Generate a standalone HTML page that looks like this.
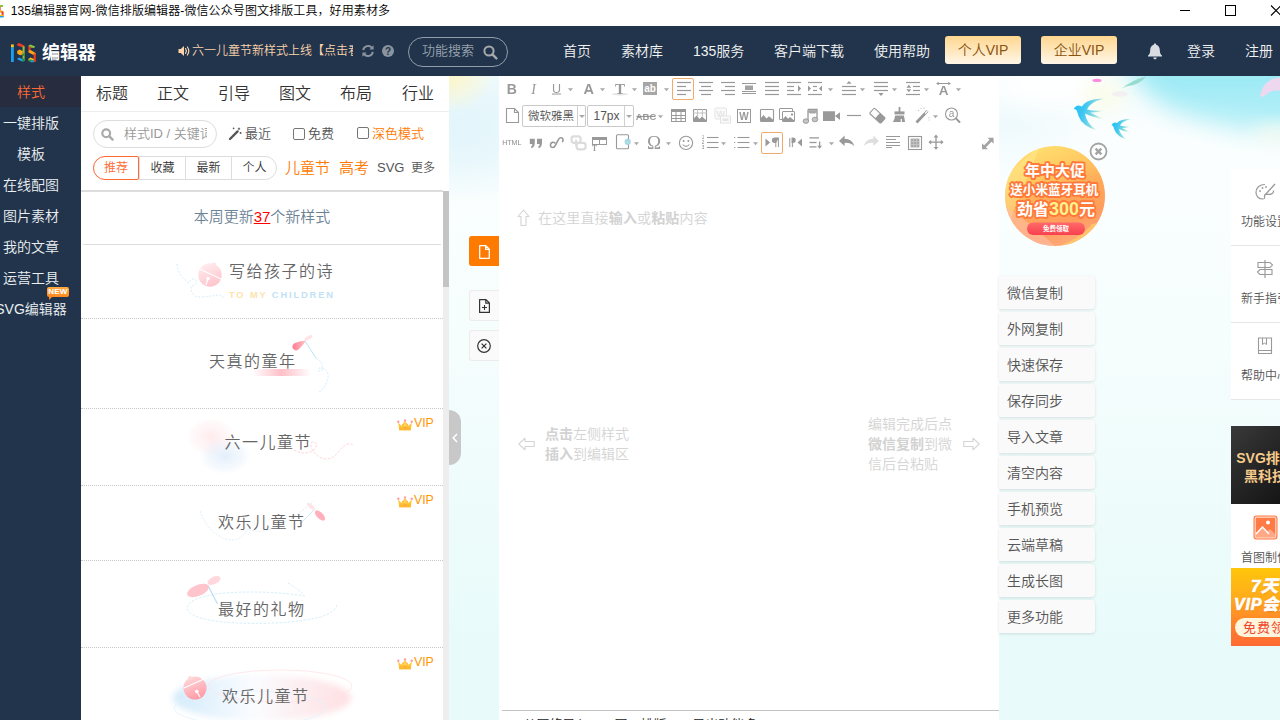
<!DOCTYPE html>
<html lang="zh-CN">
<head>
<meta charset="utf-8">
<title>135编辑器官网-微信排版编辑器-微信公众号图文排版工具，好用素材多</title>
<style>
*{box-sizing:border-box;margin:0;padding:0}
html,body{width:1280px;height:720px;overflow:hidden;background:#fff}
body{position:relative;font-family:"Liberation Sans","Noto Sans CJK SC",sans-serif;font-size:14px;color:#333;line-height:1;font-weight:350}
.abs{position:absolute}
svg{display:block;overflow:visible}
/* title bar */
#title{position:absolute;left:0;top:0;width:1280px;height:26px;background:#fff;overflow:hidden}
#title .t{position:absolute;left:10.700px;top:1px;height:21px;line-height:21px;font-size:12px;color:#000;white-space:nowrap;letter-spacing:0.1px}
/* nav */
#nav{position:absolute;left:0;top:26px;width:1280px;height:50px;background:#21344b;overflow:hidden}
#nav .lk{position:absolute;top:0;height:50px;line-height:51px;font-size:14px;color:#f2f2f2;white-space:nowrap}
#nav .vip{position:absolute;top:10px;height:28px;width:76px;border-radius:3px;background:linear-gradient(#ffd78f,#fff6e8);color:#8a5410;font-size:14px;line-height:28px;text-align:center}
/* sidebar */
#side{position:absolute;left:0;top:76px;width:81px;height:644px;background:#21344b;overflow:hidden}
#side .it{position:absolute;left:-19px;width:100px;height:31px;line-height:33px;text-align:center;font-size:14px;color:#eceff2;white-space:nowrap}
#side .it.on{background:#272c3f;color:#ff6a33;left:0;width:81px;padding-right:19px}
/* left style panel */
#panel{position:absolute;left:81px;top:76px;width:368px;height:644px;background:#fff;overflow:hidden}
/* sky */
#sky{position:absolute;left:449px;top:76px;width:831px;height:644px;overflow:hidden;background:#e9fbfa}
/* editor */
#ed{position:absolute;left:499px;top:76px;width:500px;height:644px;background:#fff;overflow:hidden}

/* nav extras */
#logo{position:absolute;left:42px;top:0;height:50px;line-height:55px;font-size:18px;font-weight:bold;color:#fff;white-space:nowrap;letter-spacing:0}
#ann{position:absolute;left:176px;top:0;width:177px;height:50px;overflow:hidden;white-space:nowrap;font-size:12px;line-height:50px;color:#fbd3ab;padding-left:16px}
#srch{position:absolute;left:408px;top:11px;width:100px;height:30px;border:1px solid #939daa;border-radius:15px;color:#98a2ae;font-size:13px;line-height:26px;padding-left:13px;white-space:nowrap}
/* panel */
#tabs{position:absolute;left:0;top:0;width:368px;height:36px;border-bottom:1px solid #eee}
#tabs span{position:absolute;top:0;height:34px;line-height:36px;font-size:16px;color:#333;white-space:nowrap}
#sin{position:absolute;left:12px;top:44px;width:124px;height:28px;border:1px solid #ddd;border-radius:14px;overflow:hidden;white-space:nowrap;font-size:13px;line-height:26px;color:#999;padding-left:30px}
.f13{position:absolute;font-size:13px;line-height:20px;height:20px;white-space:nowrap;color:#555}
.cb{position:absolute;width:12px;height:12px;border:1px solid #767676;border-radius:2px;background:#fff}
#bg4{position:absolute;left:12px;top:80px;width:184px;height:24px;border:1px solid #ddd;border-radius:12px;background:#fff}
#bg4 span{position:absolute;top:-1px;height:24px;width:46px;line-height:23px;text-align:center;font-size:12px;color:#333;border-left:1px solid #ddd;border-top:1px solid transparent;border-bottom:1px solid transparent}
#bg4 span.on{left:-1px;border:1px solid #ff6a33;color:#ff6a33;border-radius:12px 2px 2px 12px;background:#fff}
.hot{position:absolute;top:81px;height:22px;line-height:22px;font-size:15px;color:#ff7a00;white-space:nowrap}
.gry{position:absolute;top:81px;height:22px;line-height:22px;font-size:12px;color:#555;white-space:nowrap}
#list{position:absolute;left:0;top:114px;width:362px;height:530px;border-top:2px solid #ddd;overflow:hidden}
#sb{position:absolute;left:362px;top:115px;width:6px;height:529px;background:#eee}
#sb i{position:absolute;left:0;top:0;width:6px;height:96px;background:#c4c4c4}
#wk{position:absolute;left:2px;top:0;width:358px;height:53px;border-bottom:1px solid #ddd;text-align:center;font-size:15px;line-height:53px;color:#6b8296;white-space:nowrap}
#wk u{color:#f00}
.row{position:absolute;left:0;width:362px;border-bottom:1px dotted #ccc}
.row .tt{position:absolute;white-space:nowrap;font-size:17px;color:#666;letter-spacing:1px;line-height:24px;height:24px}
.vp{position:absolute;left:316px;width:40px;height:16px;font-size:12px;line-height:16px;color:#ff9800;white-space:nowrap;padding-left:17px}

.dot{position:absolute;left:81px;width:362px;height:0;border-top:1px dotted #c8c8c8}
#lc .tt{position:absolute;white-space:nowrap;font-size:16px;color:#666;letter-spacing:1.5px;line-height:24px;height:24px}
#lc .sub{position:absolute;white-space:nowrap;font-size:9.300px;font-weight:bold;letter-spacing:1.860px;line-height:14px;height:14px}
#lc .vp{position:absolute;left:397px;width:40px;height:16px;font-size:12.300px;line-height:16px;color:#ff9800;white-space:nowrap;padding-left:17px}
/* toolbar */
.selb{position:absolute;width:22px;height:22px;border:1px solid #f0aa6c;border-radius:2px;background:#fff}
.combo{position:absolute;height:22px;border:1px solid #c9c9c9;border-radius:2px;background:#fff;font-size:12px;color:#555}
.combo span{position:absolute;top:0;height:20px;line-height:20px;overflow:hidden;white-space:nowrap}
.combo i{position:absolute;top:0;width:1px;height:20px;background:#d0d0d0}
.combo i:after{content:"";position:absolute;left:2px;top:9px;border:3px solid transparent;border-top:3px solid #aaa;border-bottom:0}
.hint{position:absolute;white-space:nowrap;font-size:14px;line-height:20px;color:#d4d4d4}
.hint b{font-weight:bold;color:#d2d2d2}
#edbot{position:absolute;left:2.500px;top:634px;width:498px;height:10px;border-top:1px solid #c2c2c2;overflow:hidden}
#edbot span{position:absolute;left:22px;top:6.300px;font-size:13px;line-height:16px;color:#222;white-space:nowrap}
/* side buttons between panel and editor */
.sbtn{position:absolute;left:469px;width:30px;height:31px;border:1px solid #ececec;border-right:0;border-radius:3px 0 0 3px;background:#fafafa}
.sbtn.on{background:#ff7a00;border-color:#ff7a00;height:30px}
#hdl{position:absolute;left:449px;top:410px;width:12px;height:55px;background:#c8c8c8;border-radius:0 12px 12px 0}
/* right action buttons */
.rb{position:absolute;left:999px;width:96px;height:33px;background:#fafafa;border-radius:0 4px 4px 0;box-shadow:0 1px 3px rgba(0,0,0,.12);font-size:14px;line-height:35px;color:#555;padding-left:8px;white-space:nowrap}
/* right panel */
#rp{position:absolute;left:1231px;top:169px;width:49px;height:231px;background:#fff;overflow:hidden}
#rp .ri{position:absolute;left:0;width:49px;height:77px;border-bottom:1px solid #e6e6e6}
#rp .ri span,.rlab{position:absolute;left:10px;top:45px;font-size:12px;line-height:16px;color:#555;white-space:nowrap}
#skyg{position:absolute;left:0;top:0;width:831px;height:644px;background:
 radial-gradient(ellipse 46px 36px at 0 0,rgba(253,246,196,.95),rgba(253,248,210,.5) 60%,rgba(253,247,200,0) 100%),
 radial-gradient(ellipse 120px 75px at 10px 52px,rgba(226,245,251,1),rgba(226,245,251,.75) 45%,rgba(226,245,251,0) 100%),
 radial-gradient(ellipse 90px 50px at 560px 50px,rgba(230,247,252,.6),rgba(230,247,252,0) 100%),
 linear-gradient(to bottom,#f4fcfd 0,#fbfefe 60px,#f9fefe 150px,#f5fdfd 280px,#eefcfb 420px,#e8fbfa 560px)}
#ban1{position:absolute;left:782px;top:350px;width:49px;height:78px;background:linear-gradient(135deg,#3a3a3a 0,#2a2a2a 40%,#151515 100%);overflow:hidden}
#ban1 .b1t{position:absolute;left:-16px;top:24px;width:100px;text-align:center;font-size:14px;line-height:17.500px;font-weight:bold;color:#f6cb8c;white-space:nowrap}
#ban1 .b1t{text-indent:0}
#ban2{position:absolute;left:782px;top:428px;width:49px;height:64px;background:#fff;overflow:hidden}
#ban3{position:absolute;left:782px;top:492px;width:49px;height:78px;background:linear-gradient(to bottom,#ffc60a 0,#ffae1a 35%,#ff7a2e 80%,#ff6a33 100%);overflow:hidden;color:#fff;font-weight:bold;font-style:italic;white-space:nowrap}
#ban3 .b3a{position:absolute;left:20px;top:9px;font-size:17px;line-height:20px;text-shadow:0 1px 1px rgba(200,80,0,.5);-webkit-text-stroke:0.7px #fff;letter-spacing:0.5px}
#ban3 .b3b{position:absolute;left:3px;top:27px;font-size:16px;line-height:20px;text-shadow:0 1px 1px rgba(200,80,0,.5);-webkit-text-stroke:0.7px #fff;letter-spacing:0.8px}
#ban3 .b3c{position:absolute;left:4px;top:50px;width:80px;height:19px;border-radius:10px;background:#fff4dc;color:#f0482c;font-size:13px;line-height:19px;font-style:normal;font-weight:normal;padding-left:8px;letter-spacing:1px}
#sin span{display:block;width:83px;overflow:hidden;white-space:nowrap}
#new{position:absolute;left:47px;top:211px;width:22px;height:10px;background:linear-gradient(#ffa940,#ff8a1f);border-radius:2px;color:#fff;font-size:8px;font-weight:bold;line-height:10.500px;text-align:center;letter-spacing:0.2px}
#new:after{content:"";position:absolute;left:2px;top:9px;border-left:4px solid #ff8a1f;border-bottom:4px solid transparent}
</style>
</head>
<body>
<div id="sky">
  <div id="skyg"></div>
  <svg class="abs" style="left:0;top:0" width="831" height="644" viewBox="449 76 831 644">
    <defs>
      <linearGradient id="bd" x1="0" y1="0" x2="1" y2="0.300"><stop offset="0" stop-color="#1fc0fc"/><stop offset="0.380" stop-color="#3cc6f2"/><stop offset="0.720" stop-color="#86dae0"/><stop offset="1" stop-color="#d8f3cc" stop-opacity="0.500"/></linearGradient>
      <linearGradient id="pc" x1="0.250" y1="0" x2="0.650" y2="1"><stop offset="0" stop-color="#ffdf70"/><stop offset="0.280" stop-color="#ffcb62"/><stop offset="0.550" stop-color="#ffa858"/><stop offset="0.800" stop-color="#ff9c5e"/><stop offset="1" stop-color="#ffab7c"/></linearGradient>
      <linearGradient id="pb" x1="0" y1="0" x2="0" y2="1"><stop offset="0" stop-color="#ff6a6a"/><stop offset="1" stop-color="#f8404e"/></linearGradient>
      <filter id="b9" x="-30%" y="-60%" width="160%" height="220%"><feGaussianBlur stdDeviation="9"/></filter><filter id="b14" x="-40%" y="-80%" width="180%" height="260%"><feGaussianBlur stdDeviation="12"/></filter><linearGradient id="skb" x1="0" y1="0" x2="0" y2="1"><stop offset="0" stop-color="#90e7f3"/><stop offset="0.45" stop-color="#9deaf5"/><stop offset="1" stop-color="#c0f2f9"/></linearGradient><filter id="b1" x="-10%" y="-10%" width="120%" height="120%"><feGaussianBlur stdDeviation="0.600"/></filter>
      <clipPath id="pcc"><circle cx="1055" cy="196" r="50"/></clipPath>
    </defs>
    <ellipse cx="1050" cy="84" rx="62" ry="22" fill="#fff" filter="url(#b14)"/>
    <path d="M1112 30H1330V138Q1235 136 1172 110Q1132 90 1112 30z" fill="url(#skb)" filter="url(#b14)"/><ellipse cx="1275" cy="134" rx="22" ry="9" fill="#fdfcf0" opacity="0.8" filter="url(#b9)"/>
    <ellipse cx="1104" cy="96" rx="22" ry="14" fill="#fbfce2" opacity="0.7" filter="url(#b9)"/>
    <ellipse cx="1097" cy="80.400" rx="4.600" ry="1.700" fill="#ff8be2"/>
    <path d="M1122 88.500Q1132 80 1146 76.500Q1140 85 1126 86.500z" fill="#8fd8c9" opacity="0.900"/>
    <ellipse cx="1120" cy="94" rx="8" ry="2.800" fill="#f1e8f2" opacity="0.600"/>
    <path d="M1260 96Q1262 84 1272 79L1281 77V91Q1270 89 1263 97z" fill="#f6d6ee" opacity="0.900"/>
    <g filter="url(#b1)">
      <path d="M1074 109Q1075 105.500 1079 105.500L1082 106.500Q1086 99 1104 98.500Q1090 102 1087 109.500Q1094 111.500 1105 110.500Q1096 113 1090 112.500Q1098 116 1104 119.500Q1092 117 1085 113.500Q1086 123 1097 130.500Q1082 126 1078.500 116Q1077 111 1076.500 110z" fill="url(#bd)"/>
      <path d="M1111.500 125Q1112.500 122.500 1115 122.500L1117 123Q1120 119 1131 119Q1122 121 1120 125.500Q1125 127 1131 126.500Q1126 128.200 1122 128Q1127 130 1130.500 132.500Q1123 131 1119 129Q1120 134.500 1126.500 139.500Q1117 136.500 1114.500 130Q1113.500 127 1113 126z" fill="url(#bd)"/>
    </g>
    <g>
      <circle cx="1055" cy="196" r="50" fill="url(#pc)"/>
      <g clip-path="url(#pcc)">
        <path d="M1040 146L1010 220L1000 180z" fill="#fff3a0" opacity="0.350"/>
        <path d="M1050 250Q1082 238 1092 224Q1100 222 1110 228L1120 260z" fill="#ffd06a" opacity="0.700"/>
        <path d="M1003 205Q1030 222 1056 247L1000 250z" fill="#ffc0a8" opacity="0.600"/>
      </g>
      <rect x="1027" y="222.500" width="58" height="12.500" rx="6.200" fill="url(#pb)"/>
      <g font-family="Liberation Sans, Noto Sans CJK SC, sans-serif" font-weight="bold" text-anchor="middle" fill="#fff" stroke="#ff7a3a" stroke-width="3.800" paint-order="stroke" stroke-linejoin="round">
        <text x="1055" y="175.500" font-size="15" letter-spacing="0">年中大促</text>
        <text x="1054.300" y="194" font-size="12.600" letter-spacing="0">送小米蓝牙耳机</text>
        <text x="1056" y="214.500" font-size="16">劲省<tspan fill="#fff38c" font-size="18">300</tspan>元</text>
      </g>
      <text x="1056" y="231" font-size="6.500" font-weight="bold" text-anchor="middle" fill="#fff" font-family="Liberation Sans, Noto Sans CJK SC, sans-serif">免费领取</text>
    </g>
    <circle cx="1098.500" cy="151.500" r="8" fill="#fff" fill-opacity="0.700" stroke="#a3a3a3" stroke-width="1.800"/>
    <path d="M1095.600 148.600L1101.400 154.400M1101.400 148.600L1095.600 154.400" stroke="#a3a3a3" stroke-width="2.400"/>
  </svg>
  <div id="ban1"><div class="b1t">SVG排版<br>黑科技</div></div>
  <div id="ban2"><svg class="abs" style="left:22px;top:11px" width="25" height="25" viewBox="0 0 25 25"><rect x="0.500" y="0.500" width="24" height="24" rx="3" fill="#ff7a45"/><rect x="2.200" y="2.200" width="20.600" height="20.600" rx="1.500" fill="none" stroke="#ffd9c8" stroke-width="1.200"/><circle cx="15" cy="7.500" r="2" fill="#fff"/><path d="M3 19L9.500 12L14 16.500L17 14L22 19V22H3z" fill="#fff" opacity="0.350"/><path d="M3 19L9.500 12L16 19" fill="none" stroke="#fff" stroke-width="1.500"/></svg><span class="rlab" style="top:46px">首图制作</span></div>
  <div id="ban3"><div class="b3a">7天</div><div class="b3b">VIP会员</div><div class="b3c">免费领取</div></div>
</div>
<div id="ed">
<div class="selb" style="left:173px;top:2px"></div><div class="selb" style="left:262px;top:56px"></div>
<div class="combo" style="left:23px;top:29px;width:64px"><span style="left:5px;width:47px;font-size:11.500px">微软雅黑</span><i style="left:54px"></i></div>
<div class="combo" style="left:88px;top:29px;width:47px"><span style="left:5.500px;width:28px">17px</span><i style="left:36px"></i></div>
<svg class="abs" style="left:0;top:0;opacity:.999" width="500" height="84" viewBox="499 76 500 84">
<g transform="translate(511.7 89.0)"><text x="0" y="5" font-size="14" font-weight="bold" font-style="normal" font-family="Liberation Sans, sans-serif" fill="#999" text-anchor="middle" >B</text></g>
<g transform="translate(533.5 89.0)"><text x="0" y="5" font-size="14" font-weight="normal" font-style="italic" font-family="Liberation Serif, serif" fill="#999" text-anchor="middle" >I</text></g>
<g transform="translate(556.5 89.0)"><text x="0" y="3.6" font-size="12.5" font-weight="normal" font-style="normal" font-family="Liberation Sans, sans-serif" fill="#999" text-anchor="middle" >U</text><path d="M-4.5 5H4.5" stroke="#999" stroke-width="1"/></g>
<g transform="translate(570.5 89.5)"><path d="M-2.6 -1.2H2.6L0 1.8z" fill="#aaa"/></g>
<g transform="translate(588.8 89.0)"><text x="0" y="5" font-size="14.5" font-weight="bold" font-style="normal" font-family="Liberation Sans, sans-serif" fill="#999" text-anchor="middle" >A</text></g>
<g transform="translate(602.5 89.5)"><path d="M-2.6 -1.2H2.6L0 1.8z" fill="#aaa"/></g>
<g transform="translate(620 89.0)"><ellipse cx="0" cy="5.2" rx="8" ry="1.2" fill="#e4e4e4"/><text x="0" y="5" font-size="15" font-weight="bold" font-style="normal" font-family="Liberation Serif, serif" fill="#999" text-anchor="middle" >T</text></g>
<g transform="translate(634.5 89.5)"><path d="M-2.6 -1.2H2.6L0 1.8z" fill="#aaa"/></g>
<g transform="translate(650 88.5)"><rect x="-7" y="-6.5" width="14" height="13" fill="#a6a6a6"/><text x="0" y="3.6" font-size="10" font-weight="bold" font-style="normal" font-family="Liberation Sans, sans-serif" fill="#fff" text-anchor="middle" >ab</text></g>
<g transform="translate(666.5 89.5)"><path d="M-2.6 -1.2H2.6L0 1.8z" fill="#aaa"/></g>
<g transform="translate(684 88.5)"><path d="M-7 -6H7" stroke="#999" stroke-width="1.2"/><path d="M-7 -2H2" stroke="#999" stroke-width="1.2"/><path d="M-7 2H7" stroke="#999" stroke-width="1.2"/><path d="M-7 6H2" stroke="#999" stroke-width="1.2"/></g>
<g transform="translate(706 88.5)"><path d="M-7 -6H7" stroke="#999" stroke-width="1.2"/><path d="M-5 -2H5" stroke="#999" stroke-width="1.2"/><path d="M-7 2H7" stroke="#999" stroke-width="1.2"/><path d="M-5 6H5" stroke="#999" stroke-width="1.2"/></g>
<g transform="translate(728 88.5)"><path d="M-7 -6H7" stroke="#999" stroke-width="1.2"/><path d="M-3 -2H7" stroke="#999" stroke-width="1.2"/><path d="M-7 2H7" stroke="#999" stroke-width="1.2"/><path d="M-3 6H7" stroke="#999" stroke-width="1.2"/></g>
<g transform="translate(749 88.5)"><path d="M-7 -5H7" stroke="#999" stroke-width="1"/><rect x="-4" y="-3" width="8" height="4.5" fill="#a3a3a3"/><path d="M-7 3H7" stroke="#999" stroke-width="1"/><path d="M-7 5H7" stroke="#999" stroke-width="1"/></g>
<g transform="translate(772 88.5)"><path d="M-7 -6H7" stroke="#999" stroke-width="1.2"/><path d="M-7 -2H7" stroke="#999" stroke-width="1.2"/><path d="M-7 2H7" stroke="#999" stroke-width="1.2"/><path d="M-7 6H7" stroke="#999" stroke-width="1.2"/></g>
<g transform="translate(794 88.5)"><path d="M-7 -6H7" stroke="#999" stroke-width="1.2"/><path d="M-7 -2H0" stroke="#999" stroke-width="1.2"/><path d="M-7 2H0" stroke="#999" stroke-width="1.2"/><path d="M-7 6H7" stroke="#999" stroke-width="1.2"/><path d="M4 -3.2L7 0L4 3.2z" fill="#999"/></g>
<g transform="translate(815 88.5)"><path d="M-7 -6H7" stroke="#999" stroke-width="1.2"/><path d="M-2 -2H2" stroke="#999" stroke-width="1.2"/><path d="M-2 2H2" stroke="#999" stroke-width="1.2"/><path d="M-7 6H7" stroke="#999" stroke-width="1.2"/><path d="M-7 -3L-4 0L-7 3z" fill="#999"/><path d="M7 -3L4 0L7 3z" fill="#999"/></g>
<g transform="translate(830.5 89.5)"><path d="M-2.6 -1.2H2.6L0 1.8z" fill="#aaa"/></g>
<g transform="translate(849 88.5)"><path d="M-2.6 -4.8H2.6L0 -7.6z" fill="#999"/><path d="M-7 -2H7" stroke="#999" stroke-width="1.2"/><path d="M-7 2H7" stroke="#999" stroke-width="1.2"/><path d="M-7 6H7" stroke="#999" stroke-width="1.2"/></g>
<g transform="translate(862.5 89.5)"><path d="M-2.6 -1.2H2.6L0 1.8z" fill="#aaa"/></g>
<g transform="translate(881 88.5)"><path d="M-7 -6H7" stroke="#999" stroke-width="1.2"/><path d="M-7 -2H7" stroke="#999" stroke-width="1.2"/><path d="M-7 2H7" stroke="#999" stroke-width="1.2"/><path d="M-2.6 4.6H2.6L0 7.4z" fill="#999"/></g>
<g transform="translate(894.5 89.5)"><path d="M-2.6 -1.2H2.6L0 1.8z" fill="#aaa"/></g>
<g transform="translate(913 88.5)"><path d="M-7 -6H7" stroke="#999" stroke-width="1.2"/><path d="M-7 6H7" stroke="#999" stroke-width="1.2"/><path d="M0 -2H7" stroke="#999" stroke-width="1.2"/><path d="M0 2H7" stroke="#999" stroke-width="1.2"/><path d="M-6.6 -0.8H-1.8L-4.2 -3.8zM-6.6 0.8H-1.8L-4.2 3.8z" fill="#999"/></g>
<g transform="translate(926.5 89.5)"><path d="M-2.6 -1.2H2.6L0 1.8z" fill="#aaa"/></g>
<g transform="translate(943.5 88.5)"><path d="M-6 -5H6" stroke="#999" stroke-width="1"/><path d="M-7.4 -5L-4.8 -6.8V-3.2zM7.4 -5L4.8 -6.8V-3.2z" fill="#999"/><text x="0" y="6.8" font-size="13.5" font-weight="bold" font-style="normal" font-family="Liberation Sans, sans-serif" fill="#999" text-anchor="middle" >A</text></g>
<g transform="translate(958.5 89.5)"><path d="M-2.6 -1.2H2.6L0 1.8z" fill="#aaa"/></g>
<g transform="translate(512.5 115.5)"><path d="M-6 -7H2L6 -3V7H-6zM2 -7V-3H6" fill="none" stroke="#999" stroke-width="1.1"/></g>
<g transform="translate(646 115.9)"><text x="0" y="3.6" font-size="9.5" font-weight="bold" font-style="normal" font-family="Liberation Sans, sans-serif" fill="#9a9a9a" text-anchor="middle" >ABC</text><path d="M-9.5 0.5H9.5" stroke="#8c8c8c" stroke-width="1"/></g>
<g transform="translate(660.5 116.5)"><path d="M-2.6 -1.2H2.6L0 1.8z" fill="#aaa"/></g>
<g transform="translate(678.5 115.5)"><rect x="-7" y="-6" width="14" height="12" fill="none" stroke="#999" stroke-width="1"/><rect x="-7.5" y="-6.5" width="15" height="3" fill="#999"/><path d="M-7 0H7M-7 3H7M-2.500 -3.500V6M2.500 -3.500V6" stroke="#999" stroke-width="1" fill="none"/></g>
<g transform="translate(700 115.5)"><rect x="-6.5" y="-6" width="13" height="12" rx="0.8" fill="none" stroke="#999" stroke-width="1.1"/><path d="M-7 -2.500H7M-2.400 -6.500V1M2.400 -6.500V1" stroke="#bbb" stroke-width="0.9" fill="none"/><path d="M-6.5 6V3.500L-3.500 0L-0.500 3.500L2 1L6.500 5V6z" fill="#999"/></g>
<g transform="translate(723 115.5)"><rect x="-8" y="-7.5" width="11.5" height="11" rx="1" fill="#fafafa" stroke="#e3e3e3" stroke-width="1"/><text x="-2.2" y="1.6" font-size="9" font-weight="bold" font-style="normal" font-family="Liberation Sans, sans-serif" fill="#e6e6e6" text-anchor="middle" >W</text><rect x="-2.500" y="0.500" width="10" height="7" fill="#fafafa" stroke="#e3e3e3" stroke-width="1"/><rect x="-0.500" y="3" width="6" height="2.400" fill="#e3e3e3"/></g>
<g transform="translate(744 115.5)"><rect x="-6.500" y="-6" width="13" height="13" fill="none" stroke="#999" stroke-width="1"/><text x="0" y="4.3" font-size="10" font-weight="bold" font-style="normal" font-family="Liberation Sans, sans-serif" fill="#999" text-anchor="middle" >W</text></g>
<g transform="translate(767 115.5)"><rect x="-6.500" y="-6" width="13" height="12" rx="0.800" fill="none" stroke="#999" stroke-width="1.1"/><path d="M-6.500 5.600V3L-3.500 -0.600L-0.500 3L2 0.800L6.500 4.600V5.600z" fill="#999"/></g>
<g transform="translate(787 115.5)"><rect x="-7.500" y="-7" width="13" height="11" rx="0.500" fill="#fff" stroke="#999" stroke-width="1"/><rect x="-4.500" y="-4" width="12" height="10" rx="0.500" fill="#fff" stroke="#999" stroke-width="1"/><path d="M-4 5.500V3.500L-1.400 0.400L1 3.200L3 1.400L7 4.800V5.500z" fill="#999"/><rect x="4" y="-2" width="2" height="2" fill="#999"/></g>
<g transform="translate(810.5 116.5)"><path d="M-2.500 -7H6.500V3M-2.500 -7V4.500" fill="none" stroke="#999" stroke-width="1.300"/><path d="M-2.500 -5H6.500" stroke="#a8a8a8" stroke-width="2.600"/><path d="M-1 -3.600H5" stroke="#999" stroke-width="1"/><ellipse cx="-4.600" cy="4.600" rx="2.800" ry="2.300" fill="#c4c4c4" stroke="#999" stroke-width="0.900"/><ellipse cx="4.400" cy="3" rx="2.800" ry="2.300" fill="#c4c4c4" stroke="#999" stroke-width="0.900"/></g>
<g transform="translate(831.5 116.0)"><rect x="-8.500" y="-4.800" width="12" height="9.800" rx="0.300" fill="#999"/><path d="M3.500 0L8.500 -3.800V4z" fill="#999"/></g>
<g transform="translate(854 115.5)"><path d="M-7 0H7" stroke="#999" stroke-width="1.2"/></g>
<g transform="translate(877.4 115.7)"><g transform="rotate(42)"><rect x="-7.500" y="-3.600" width="15" height="7.200" rx="1" fill="#fff" stroke="#999" stroke-width="1.100"/><rect x="0" y="-3.600" width="7.500" height="7.200" rx="1" fill="#999"/></g></g>
<g transform="translate(899.5 115.0)"><rect x="-0.900" y="-8" width="1.800" height="5" fill="#999"/><rect x="-5" y="-3.600" width="10" height="3" fill="#999"/><path d="M-4.400 0.400H4.400L5.600 7H2.400V4H1.200V7H-6.600Q-4.800 4.500 -4.400 0.400z" fill="#999"/></g>
<g transform="translate(922.5 115.5)"><path d="M-6 7L5 -4.600" stroke="#999" stroke-width="2.800"/><path d="M2.600 -2L5 -4.600" stroke="#fff" stroke-width="1.200"/><path d="M-2 -7.400l1 1M1.500 -8v1.400M-4.600 -5h1.200M6.500 1.500v1.200M6 4.600h1" stroke="#bbb" stroke-width="0.900"/></g>
<g transform="translate(935.5 116.5)"><path d="M-2.6 -1.2H2.6L0 1.8z" fill="#aaa"/></g>
<g transform="translate(952.5 115.2)"><circle cx="-1" cy="-1.200" r="6" fill="none" stroke="#999" stroke-width="1.100"/><path d="M3.600 3.400L7 6.800" stroke="#999" stroke-width="2" stroke-linecap="round"/><text x="-1" y="1.6" font-size="10" font-weight="normal" font-style="normal" font-family="Liberation Sans, sans-serif" fill="#999" text-anchor="middle" >a</text></g>
<g transform="translate(511.8 142.8)"><text x="0" y="2" font-size="7" font-weight="normal" font-style="normal" font-family="Liberation Sans, sans-serif" fill="#8a8a8a" text-anchor="middle" >HTML</text></g>
<g transform="translate(536 143.2)"><path d="M-6.200 -4.500H-1.200V-0.500Q-1.200 3.500 -4.200 5L-5.200 3.800Q-3.600 2.800 -3.600 0.800H-6.200zM1 -4.500H6V-0.500Q6 3.500 3 5L2 3.800Q3.600 2.800 3.600 0.800H1z" fill="#999"/></g>
<g transform="translate(557 143.2)"><path d="M5.600 -1.600C7.400 -5 3.400 -7 1.400 -3.600L-1.600 2.200C-3.200 5.600 -7.400 4.400 -6.400 1C-5.800 -1 -3.600 -1.400 -2.200 -0.400" fill="none" stroke="#999" stroke-width="1.600" stroke-linecap="round"/></g>
<g transform="translate(578.6 142.8)"><rect x="-7" y="-6.500" width="9" height="6.500" rx="2.200" fill="none" stroke="#dcdcdc" stroke-width="2.200"/><rect x="-2" y="0" width="9" height="6.500" rx="2.200" fill="none" stroke="#dcdcdc" stroke-width="2.200"/><path d="M-2.500 -3.200V3.200" stroke="#dcdcdc" stroke-width="2"/></g>
<g transform="translate(599.5 142.5)"><rect x="-7" y="-5" width="14" height="7" fill="none" stroke="#999" stroke-width="1"/><rect x="-7.500" y="-5.500" width="15" height="3" fill="#999"/><path d="M0 -2.500V2" stroke="#999" stroke-width="1"/><text x="-5" y="8.8" font-size="7.5" font-weight="bold" font-style="normal" font-family="Liberation Serif, serif" fill="#999" text-anchor="middle" >T</text></g>
<g transform="translate(623.5 142.0)"><rect x="-7" y="-7.200" width="12" height="14" rx="1" fill="#fff" stroke="#999" stroke-width="1.100"/><circle cx="4.200" cy="-0.200" r="3.100" fill="#9fd6ee"/><path d="M2.600 -1.600q1.600 0.600 1.200 2.400q1.400 0.200 2.200 -1.400" fill="none" stroke="#b8e6c0" stroke-width="1.200"/></g>
<g transform="translate(636.5 143.5)"><path d="M-2.6 -1.2H2.6L0 1.8z" fill="#aaa"/></g>
<g transform="translate(654 142.8)"><text x="0" y="6.2" font-size="19" font-weight="normal" font-style="normal" font-family="Liberation Serif, serif" fill="#999" text-anchor="middle" >Ω</text></g>
<g transform="translate(668.5 143.5)"><path d="M-2.6 -1.2H2.6L0 1.8z" fill="#aaa"/></g>
<g transform="translate(686 142.9)"><circle cx="0" cy="0" r="6.600" fill="none" stroke="#999" stroke-width="1.100"/><circle cx="-2.400" cy="-2" r="1" fill="#999"/><circle cx="2.400" cy="-2" r="1" fill="#999"/><path d="M-3.400 1.600Q0 5.400 3.400 1.600" fill="none" stroke="#999" stroke-width="1.100"/></g>
<g transform="translate(710.5 142.5)"><path d="M-3.5 -5H8" stroke="#999" stroke-width="1.1"/><path d="M-3.5 0H8" stroke="#999" stroke-width="1.1"/><path d="M-3.5 5H8" stroke="#999" stroke-width="1.1"/><text x="-7.4" y="-3.4" font-size="4.6" font-weight="normal" font-style="normal" font-family="Liberation Sans, sans-serif" fill="#888" text-anchor="middle" >1</text><text x="-7.4" y="1.6" font-size="4.6" font-weight="normal" font-style="normal" font-family="Liberation Sans, sans-serif" fill="#888" text-anchor="middle" >2</text><text x="-7.4" y="6.6" font-size="4.6" font-weight="normal" font-style="normal" font-family="Liberation Sans, sans-serif" fill="#888" text-anchor="middle" >3</text></g>
<g transform="translate(723.5 143.5)"><path d="M-2.6 -1.2H2.6L0 1.8z" fill="#aaa"/></g>
<g transform="translate(741.5 142.5)"><path d="M-4 -5H8" stroke="#999" stroke-width="1.1"/><path d="M-4 0H8" stroke="#999" stroke-width="1.1"/><path d="M-4 5H8" stroke="#999" stroke-width="1.1"/><rect x="-7.400" y="-5.500" width="1.200" height="1" fill="#999"/><rect x="-7.400" y="-0.500" width="1.200" height="1" fill="#999"/><rect x="-7.400" y="4.500" width="1.200" height="1" fill="#999"/></g>
<g transform="translate(755.5 143.5)"><path d="M-2.6 -1.2H2.6L0 1.8z" fill="#aaa"/></g>
<g transform="translate(772 142.5)"><path d="M-6.500 -4L-2 0L-6.500 4z" fill="#999"/><path d="M3.800 -4.400V4.600M6.400 -4.400V4.600" stroke="#999" stroke-width="1"/><path d="M7.200 -4.900H2.600A2.700 2.700 0 0 0 2.600 0.500H4z" fill="#999"/></g>
<g transform="translate(795 142.5)"><path d="M7 -4L2.500 0L7 4z" fill="#999"/><path d="M-5.200 -4.400V4.600M-2.600 -4.400V4.600" stroke="#999" stroke-width="1"/><path d="M-6.600 -4.900H-2A2.700 2.700 0 0 1 -2 0.500H-3.400V-4.900z" fill="#999"/></g>
<g transform="translate(816 142.5)"><path d="M-6.5 -4.6H3" stroke="#999" stroke-width="1.3"/><path d="M-6.5 0H0.5" stroke="#999" stroke-width="1.3"/><path d="M-6.5 4.4H0.5" stroke="#999" stroke-width="1.3"/><path d="M3.600 -1V5" stroke="#999" stroke-width="1.300"/><path d="M1.200 3.200H6L3.600 6.200z" fill="#999"/></g>
<g transform="translate(831.5 143.5)"><path d="M-2.6 -1.2H2.6L0 1.8z" fill="#aaa"/></g>
<g transform="translate(847 141.9)"><path d="M-8 -1L-2.400 -6.400V-3.200Q5.400 -3 7.600 4.600Q3.600 0.400 -2.400 1V4.200z" fill="#999"/></g>
<g transform="translate(871 141.9)"><path d="M8 -1L2.400 -6.400V-3.200Q-5.400 -3 -7.600 4.600Q-3.600 0.400 2.400 1V4.200z" fill="#dedede"/></g>
<g transform="translate(893 142.5)"><path d="M-7 -6H7" stroke="#999" stroke-width="1"/><path d="M-7 -3H3" stroke="#999" stroke-width="1"/><path d="M-7 0H7" stroke="#999" stroke-width="1"/><path d="M-7 3H7" stroke="#999" stroke-width="1"/><path d="M-7 5H-1" stroke="#999" stroke-width="1"/></g>
<g transform="translate(915 143.0)"><rect x="-6.500" y="-6.500" width="13" height="13" fill="none" stroke="#999" stroke-width="1.100"/><rect x="-4.400" y="-4.400" width="8.800" height="8.800" fill="#a8a8a8"/><path d="M-4.400 -1.500H4.400M-4.400 1.500H4.400M-1.500 -4.400V4.400M1.500 -4.400V4.400" stroke="#c9c9c9" stroke-width="0.800"/></g>
<g transform="translate(936 142.2)"><path d="M-6 0H6M0 -6V6" stroke="#999" stroke-width="1.300"/><path d="M-7.600 0L-4.800 -2.400V2.400zM7.600 0L4.800 -2.400V2.400zM0 -7.600L-2.400 -4.800H2.400zM0 7.600L-2.400 4.800H2.400z" fill="#999"/></g>
<g transform="translate(987.8 143.5)"><path d="M-3.500 3.500L3.500 -3.500" stroke="#a3a3a3" stroke-width="2.600"/><path d="M5.800 -5.800V0.200L-0.200 -5.800zM-5.800 5.800V-0.200L0.200 5.800z" fill="#a3a3a3"/></g>
</svg>
<svg class="abs" style="left:18px;top:133px" width="13" height="18" viewBox="0 0 13 18">
  <path d="M6.500 1L12 7.500H9V16.500H4V7.500H1z" fill="none" stroke="#d4d4d4" stroke-width="1.1" stroke-linejoin="round"/>
</svg>
<div class="hint" style="left:39px;top:131px;font-size:14px;line-height:22px;letter-spacing:0.15px">在这里直接<b>输入</b>或<b>粘贴</b>内容</div>
<svg class="abs" style="left:19px;top:361px" width="17" height="14" viewBox="0 0 17 14">
  <path d="M0.800 7L7 1.200V4.500H16.200V9.500H7V12.800z" fill="none" stroke="#d4d4d4" stroke-width="1.1" stroke-linejoin="round"/>
</svg>
<div class="hint" style="left:46px;top:348px"><b>点击</b>左侧样式<br><b>插入</b>到编辑区</div>
<div class="hint" style="left:369px;top:338px">编辑完成后点<br><b>微信复制</b>到微<br>信后台粘贴</div>
<svg class="abs" style="left:464px;top:361px" width="17" height="14" viewBox="0 0 17 14">
  <path d="M16.200 7L10 1.200V4.500H0.800V9.500H10V12.800z" fill="none" stroke="#d4d4d4" stroke-width="1.1" stroke-linejoin="round"/>
</svg>
<div id="edbot"><span>从网络导入　　图　排版　　导出功能多　　　　　　　　　　　　　　　　　　　　　　　　　　　　　　上</span></div>

</div>
<div class="sbtn on" style="top:236px"><svg class="abs" style="left:9px;top:8px" width="11" height="14" viewBox="0 0 11 14"><path d="M0.700 0.700H6.800L10.300 4.200V13.300H0.700zM6.600 0.700V4.400H10.300" fill="none" stroke="#fff" stroke-width="1.300" stroke-linejoin="round"/></svg></div>
<div class="sbtn" style="top:290px"><svg class="abs" style="left:9px;top:8px" width="11" height="14" viewBox="0 0 11 14"><path d="M0.600 0.600H7L10.400 4V13.400H0.600zM6.800 0.600V4.200H10.400" fill="none" stroke="#333" stroke-width="1.200" stroke-linejoin="round"/><path d="M5.500 6V11M3 8.500H8" stroke="#333" stroke-width="1.100"/></svg></div>
<div class="sbtn" style="top:330px"><svg class="abs" style="left:7px;top:8px" width="14" height="14" viewBox="0 0 14 14"><circle cx="7" cy="7" r="6.300" fill="none" stroke="#333" stroke-width="1.200"/><path d="M4.600 4.600L9.400 9.400M9.400 4.600L4.600 9.400" stroke="#333" stroke-width="1.200"/></svg></div>
<div id="hdl"><svg class="abs" style="left:3px;top:23px" width="6" height="10" viewBox="0 0 6 10"><path d="M5 1L1.200 5L5 9" fill="none" stroke="#fff" stroke-width="1.500"/></svg></div>
<div class="rb" style="top:276px">微信复制</div>
<div class="rb" style="top:312px">外网复制</div>
<div class="rb" style="top:348px">快速保存</div>
<div class="rb" style="top:384px">保存同步</div>
<div class="rb" style="top:420px">导入文章</div>
<div class="rb" style="top:456px">清空内容</div>
<div class="rb" style="top:492px">手机预览</div>
<div class="rb" style="top:528px">云端草稿</div>
<div class="rb" style="top:564px">生成长图</div>
<div class="rb" style="top:600px">更多功能</div>
<div id="rp">
  <div class="ri" style="top:0"><svg class="abs" style="left:24px;top:13px" width="22" height="20" viewBox="0 0 22 20"><path d="M10 2.500C4.500 2.500 1 6 1 10.500C1 14.500 4 17 7.500 17C9.500 17 10 15.800 9.600 14.600C9.200 13.200 10 12.400 11.400 12.400H14C17 12.400 18.600 10.600 18.600 8.600" fill="none" stroke="#999" stroke-width="1.200"/><path d="M10 13L20 2" stroke="#999" stroke-width="1.300"/><circle cx="5" cy="9" r="0.900" fill="#999"/><circle cx="7.500" cy="6" r="0.900" fill="#999"/><circle cx="11" cy="5" r="0.900" fill="#999"/></svg><span>功能设置</span></div>
  <div class="ri" style="top:77px"><svg class="abs" style="left:24px;top:13px" width="20" height="20" viewBox="0 0 20 20"><path d="M10 1V19" stroke="#999" stroke-width="1.200"/><path d="M3 3.500H15L17.500 6L15 8.500H3zM17 10.500H5L2.500 13L5 15.500H17z" fill="none" stroke="#999" stroke-width="1.100"/></svg><span>新手指引</span></div>
  <div class="ri" style="top:154px"><svg class="abs" style="left:26px;top:14px" width="16" height="18" viewBox="0 0 16 18"><path d="M1.500 1H14.500V16.500H1.500zM1.500 13.500H14.500" fill="none" stroke="#999" stroke-width="1.100"/><path d="M5.500 1V7.500L7.500 6L9.500 7.500V1" fill="none" stroke="#999" stroke-width="1"/></svg><span>帮助中心</span></div>
</div>
<div id="panel">
  <div id="tabs">
    <span style="left:15px">标题</span><span style="left:76px">正文</span><span style="left:137px">引导</span><span style="left:198px">图文</span><span style="left:259px">布局</span><span style="left:321px">行业</span>
  </div>
  <div id="sin"><span>样式ID / 关键词</span></div>
  <svg class="abs" style="left:20px;top:52px" width="13" height="13" viewBox="0 0 13 13">
    <circle cx="5.2" cy="5.2" r="3.900" fill="none" stroke="#ababab" stroke-width="2.200"/>
    <path d="M8.2 8.2L11.6 11.6" stroke="#ababab" stroke-width="2.400" stroke-linecap="round"/>
  </svg>
  <svg class="abs" style="left:148px;top:51px" width="13" height="13" viewBox="0 0 13 13">
    <path d="M1 12L8.6 4.4" stroke="#555" stroke-width="2.4" stroke-linecap="round"/>
    <path d="M10 0.6v2.4M8.8 1.8h2.4M11.6 5v2M10.6 6h2M4.6 0.6v1.6M3.8 1.4h1.6" stroke="#555" stroke-width="0.9"/>
  </svg>
  <div class="f13" style="left:164px;top:48px">最近</div>
  <div class="cb" style="left:212px;top:52px"></div>
  <div class="f13" style="left:227px;top:48px">免费</div>
  <div class="cb" style="left:276px;top:51px"></div>
  <div class="f13" style="left:291px;top:48px;color:#ff7a00">深色模式</div>
  <div id="bg4"><span class="on">推荐</span><span style="left:45px">收藏</span><span style="left:91px">最新</span><span style="left:137px">个人</span></div>
  <div class="hot" style="left:204px">儿童节</div>
  <div class="hot" style="left:258px">高考</div>
  <div class="gry" style="left:296px;font-size:13px">SVG</div>
  <div class="gry" style="left:330px">更多</div>
  <div id="list">
    <div id="wk" style="line-height:50px">本周更新<u>37</u>个新样式</div>
    <div id="lc" style="position:absolute;left:-81px;top:-192px;width:1280px;height:720px">
      <svg class="abs" style="left:81px;top:192px" width="362" height="528" viewBox="81 192 362 528">
        <defs>
          <linearGradient id="gb" x1="0.2" y1="0" x2="0.6" y2="1"><stop offset="0" stop-color="#ffeef0"/><stop offset="1" stop-color="#ffc3cb"/></linearGradient>
          <linearGradient id="gb2" x1="0.2" y1="0" x2="0.6" y2="1"><stop offset="0" stop-color="#ffd9dc"/><stop offset="1" stop-color="#ff9aa6"/></linearGradient>
          <linearGradient id="gp" x1="0" y1="0" x2="1" y2="0"><stop offset="0" stop-color="#ff7f90"/><stop offset="1" stop-color="#ffc2ca"/></linearGradient>
          <linearGradient id="gu" x1="0" y1="0" x2="1" y2="0"><stop offset="0" stop-color="#ffb8c2" stop-opacity="0"/><stop offset="0.5" stop-color="#ffb8c2" stop-opacity="0.9"/><stop offset="1" stop-color="#ffb8c2" stop-opacity="0"/></linearGradient>
          <radialGradient id="grp"><stop offset="0" stop-color="#ffe2e5" stop-opacity="0.7"/><stop offset="0.5" stop-color="#ffe2e5" stop-opacity="0.35"/><stop offset="1" stop-color="#ffd0d4" stop-opacity="0"/></radialGradient>
          <radialGradient id="grb"><stop offset="0" stop-color="#dceafa" stop-opacity="0.8"/><stop offset="0.5" stop-color="#dceafa" stop-opacity="0.4"/><stop offset="1" stop-color="#cfe2f8" stop-opacity="0"/></radialGradient>
          <linearGradient id="ge" x1="0" y1="0" x2="1" y2="0"><stop offset="0" stop-color="#d3ebfb"/><stop offset="0.45" stop-color="#fafcff"/><stop offset="1" stop-color="#ffdfe2"/></linearGradient>
          <filter id="bl4" x="-20%" y="-40%" width="140%" height="180%"><feGaussianBlur stdDeviation="3"/></filter>
        </defs>
        <!-- row1 -->
        <path d="M177 264q1 12 12 19q3-6 7-3q2 4-5 6q0 12 10 11q12-1 17-2q5 0 6 4" fill="none" stroke="#d6eefb" stroke-width="1" stroke-dasharray="2 1.5"/>
        <circle cx="210" cy="275" r="11.7" fill="url(#gb)"/>
        <circle cx="214" cy="264.5" r="2" fill="#ffe3e6"/>
        <path d="M199.500 269L221 279" stroke="#fff" stroke-width="1.2"/>
        <path d="M207.800 279L206 285" stroke="#fff" stroke-width="1.2"/><circle cx="208" cy="278.500" r="1.8" fill="#fff"/>
        <!-- row2 -->
        <rect x="252" y="369" width="59" height="7" fill="url(#gu)"/>
        <path d="M305 341L316 358" stroke="#bfe3f7" stroke-width="1" fill="none"/>
        <path d="M316 358q8 4 6 12q-4 4-3-2q10 0 9 10q-2 10-9 14" fill="none" stroke="#d2ecfb" stroke-width="1" stroke-dasharray="2 1.5"/>
        <path transform="translate(0.5 1.2)" d="M292.600 347.600A3.800 3.800 0 0 1 294.400 341.800Q300 339.600 305.600 339.400Q303 343.400 299 347.400A3.800 3.800 0 0 1 292.600 347.600z" fill="url(#gp)"/>
        <ellipse cx="308.500" cy="337.800" rx="4.500" ry="1.800" transform="rotate(-30 308.500 337.800)" fill="#ffdde1" opacity="0.8"/>
        <!-- row3 -->
        <ellipse cx="211" cy="437" rx="24" ry="19" fill="url(#grp)"/>
        <ellipse cx="225" cy="456" rx="26" ry="18" fill="url(#grb)"/>
        <path d="M294 450q10 6 20 0q6-8-2-8q-4 6 6 14q12 8 22-6q8-10 14-4" fill="none" stroke="#ffd3d8" stroke-width="1" stroke-dasharray="2.5 1.5"/>
        <!-- row4 -->
        <path d="M200 511q8 22 26 28q14 4 22-10q14 6 32-4q18-10 34-24" fill="none" stroke="#dbf0fc" stroke-width="1" stroke-dasharray="2 1.5"/>
        <path d="M300 524L314 510" stroke="#cfeafa" stroke-width="1"/>
        <ellipse cx="320" cy="515.500" rx="6.500" ry="3.200" transform="rotate(45 320 515.500)" fill="#ffb0bc"/>
        <ellipse cx="311" cy="506.500" rx="5" ry="1.800" transform="rotate(40 311 506.500)" fill="#ffdce0" opacity="0.8"/>
        <!-- row5 -->
        <path d="M305 596q-40-6-80-3q-38 4-38 16q6 12 50 14q50 2 84-6q16-6 16-13" fill="none" stroke="#d6eefb" stroke-width="1" stroke-dasharray="2.5 1.5"/>
        <path d="M288 583q10 6 16 12" fill="none" stroke="#d6eefb" stroke-width="1" stroke-dasharray="2.5 1.5"/>
        <path d="M208 585.500L217.500 604" stroke="#b9def3" stroke-width="1.2"/>
        <ellipse cx="198" cy="590.500" rx="11.500" ry="5.500" transform="rotate(-22 198 590.500)" fill="#ffc4cc"/>
        <ellipse cx="214" cy="580.500" rx="7" ry="3.600" transform="rotate(-25 214 580.500)" fill="#ffd7dc"/>
        <!-- row6 -->
        <ellipse cx="262" cy="698" rx="89" ry="23" fill="url(#ge)" filter="url(#bl4)"/>
        <ellipse cx="280" cy="686" rx="72" ry="16" fill="none" stroke="#ffe3e6" stroke-width="0.8"/>
        <ellipse cx="250" cy="708" rx="76" ry="17" fill="none" stroke="#e3f2fc" stroke-width="0.8"/>
        <circle cx="195" cy="688" r="11.500" fill="url(#gb2)"/>
        <circle cx="190" cy="678" r="2" fill="#ffd9dc"/>
        <path d="M184 688L206 678" stroke="#fff" stroke-width="1.2"/>
        <path d="M197 692L200 697" stroke="#fff" stroke-width="1.2"/><circle cx="196.800" cy="691.500" r="1.800" fill="#fff"/>
      </svg>
      <div class="dot" style="top:318px"></div><div class="dot" style="top:408px"></div><div class="dot" style="top:485px"></div><div class="dot" style="top:560px"></div><div class="dot" style="top:647px"></div>
      <div class="tt" style="left:229px;top:260px">写给孩子的诗</div>
      <div class="sub" style="left:229px;top:287.5px"><span style="color:#fde3ab">TO MY</span> <span style="color:#bfe2f6">CHILDREN</span></div>
      <div class="tt" style="left:209px;top:350px">天真的童年</div>
      <div class="tt" style="left:224.500px;top:431px">六一儿童节</div>
      <div class="tt" style="left:218px;top:511px">欢乐儿童节</div>
      <div class="tt" style="left:218px;top:598px">最好的礼物</div>
      <div class="tt" style="left:222px;top:685px">欢乐儿童节</div>
      <div class="vp" style="top:415px"><svg class="abs" style="left:0;top:3.500px" width="16" height="12" viewBox="0 0 16 12"><path d="M4.600 6.200L6.800 3.400L5.400 8zM11.400 6.200L9.200 3.400L10.600 8z" fill="#ff8f8f"/><path d="M1.200 3.600L4.600 7L8 1.800L11.400 7L14.800 3.600L13.800 11.200H2.200z" fill="#ffc738"/><path d="M2 8.200H14L13.800 11.200H2.200z" fill="#ffb92e"/><path d="M8 2.400L9.600 7H6.400z" fill="#ffd84f"/><circle cx="1.300" cy="2.800" r="1.200" fill="#ff9ca6"/><circle cx="8" cy="1.400" r="1.200" fill="#ff9ca6"/><circle cx="14.700" cy="2.800" r="1.200" fill="#ff9ca6"/><ellipse cx="8" cy="8.800" rx="0.700" ry="1.300" fill="#f0a060"/></svg>VIP</div>
      <div class="vp" style="top:492px"><svg class="abs" style="left:0;top:3.500px" width="16" height="12" viewBox="0 0 16 12"><path d="M4.600 6.200L6.800 3.400L5.400 8zM11.400 6.200L9.200 3.400L10.600 8z" fill="#ff8f8f"/><path d="M1.200 3.600L4.600 7L8 1.800L11.400 7L14.800 3.600L13.800 11.200H2.200z" fill="#ffc738"/><path d="M2 8.200H14L13.800 11.200H2.200z" fill="#ffb92e"/><path d="M8 2.400L9.600 7H6.400z" fill="#ffd84f"/><circle cx="1.300" cy="2.800" r="1.200" fill="#ff9ca6"/><circle cx="8" cy="1.400" r="1.200" fill="#ff9ca6"/><circle cx="14.700" cy="2.800" r="1.200" fill="#ff9ca6"/><ellipse cx="8" cy="8.800" rx="0.700" ry="1.300" fill="#f0a060"/></svg>VIP</div>
      <div class="vp" style="top:654px"><svg class="abs" style="left:0;top:3.500px" width="16" height="12" viewBox="0 0 16 12"><path d="M4.600 6.200L6.800 3.400L5.400 8zM11.400 6.200L9.200 3.400L10.600 8z" fill="#ff8f8f"/><path d="M1.200 3.600L4.600 7L8 1.800L11.400 7L14.800 3.600L13.800 11.200H2.200z" fill="#ffc738"/><path d="M2 8.200H14L13.800 11.200H2.200z" fill="#ffb92e"/><path d="M8 2.400L9.600 7H6.400z" fill="#ffd84f"/><circle cx="1.300" cy="2.800" r="1.200" fill="#ff9ca6"/><circle cx="8" cy="1.400" r="1.200" fill="#ff9ca6"/><circle cx="14.700" cy="2.800" r="1.200" fill="#ff9ca6"/><ellipse cx="8" cy="8.800" rx="0.700" ry="1.300" fill="#f0a060"/></svg>VIP</div>
    </div>
  </div>
  <div id="sb"><i></i></div>
</div>
<div id="side">
  <div class="it on" style="top:0">样式</div>
  <div class="it" style="top:31px">一键排版</div>
  <div class="it" style="top:62px">模板</div>
  <div class="it" style="top:93px">在线配图</div>
  <div class="it" style="top:124px">图片素材</div>
  <div class="it" style="top:155px">我的文章</div>
  <div class="it" style="top:186px">运营工具</div>
  <div class="it" style="top:217px">SVG编辑器</div>
  <div id="new">NEW</div>
</div>
<div id="nav">
  <svg class="abs" style="left:10px;top:17px" width="27" height="20" viewBox="0 0 27 20">
    <rect x="1" y="1.4" width="2.8" height="3.2" fill="#f7c31c"/><rect x="1" y="4.4" width="2.8" height="14.6" fill="#1c9ff0"/>
    <polygon points="7.2,1 9,0 14.4,2.6 14.4,5 7.2,2.6" fill="#ef3a24"/>
    <rect x="12.6" y="3.4" width="2" height="14.6" fill="#8bc53f"/>
    <polygon points="7.2,8 9.4,6.6 12.8,8 12.8,11.6 10,12.2 7.2,10.6" fill="#f9a61a"/>
    <polygon points="12.6,10 14.6,11 14.6,13.4 12.6,12.4" fill="#2e8b3d"/>
    <polygon points="7.4,15.6 9.2,14.4 12.8,16.2 12.8,18.8 7.4,16.6" fill="#1c9ff0"/>
    <polygon points="12.6,16 14.6,15 14.6,18 12.6,19" fill="#2e8b3d"/>
    <polygon points="18.6,2.6 20.4,1.4 25.2,3.4 24,5 18.6,4.2" fill="#8bc53f"/>
    <rect x="18.4" y="3.4" width="2.2" height="6" fill="#ef3a24"/>
    <polygon points="18.6,7.8 20.6,7 25.6,10 25.6,12 23.6,12 18.6,9.4" fill="#f9a61a"/>
    <rect x="23.6" y="10.6" width="2.2" height="8.4" fill="#ef3a24"/>
    <polygon points="18.4,16 20.4,14.6 23.8,16 23.8,17.4 18.4,17.6" fill="#f7c31c"/>
    <polygon points="18.4,16.8 21,16.4 23.8,17.6 23.8,19 21.4,19.2 18.4,18.2" fill="#2e8b3d"/>
    <polygon points="20.4,17.8 23.6,17.6 23.6,19.2 21.2,19.2" fill="#1c9ff0"/>
  </svg>
  <div id="logo">编辑器</div>
  <div id="ann">六一儿童节新样式上线【点击看</div>
  <svg class="abs" style="left:178px;top:19px" width="13" height="12" viewBox="0 0 13 12">
    <path d="M0.5 4h2.3l3.2-3v10l-3.2-3H0.5z" fill="#fbd3ab"/>
    <path d="M7.6 3.6q1.6 2.4 0 4.8M9.4 2q2.8 4 0 8" fill="none" stroke="#fbd3ab" stroke-width="1.2" stroke-linecap="round"/>
  </svg>
  <svg class="abs" style="left:361px;top:18px" width="14" height="14" viewBox="0 0 14 14">
    <path d="M2.2 6.2A5 5 0 0 1 11 3.8M11.8 7.8A5 5 0 0 1 3 10.2" fill="none" stroke="#8a94a0" stroke-width="2"/>
    <path d="M12.6 1.2v4.2H8.4zM1.4 12.8V8.6h4.2z" fill="#8a94a0"/>
  </svg>
  <svg class="abs" style="left:382px;top:19px" width="12" height="12" viewBox="0 0 12 12">
    <circle cx="6" cy="6" r="6" fill="#8a94a0"/>
    <text x="6" y="9.6" font-size="10" font-weight="bold" text-anchor="middle" fill="#21344b" font-family="Liberation Sans, sans-serif">?</text>
  </svg>
  <div id="srch">功能搜索</div>
  <svg class="abs" style="left:483px;top:19px" width="15" height="15" viewBox="0 0 15 15">
    <circle cx="6" cy="6" r="4.6" fill="none" stroke="#a7a9ab" stroke-width="2"/>
    <path d="M9.4 9.4L13.4 13.4" stroke="#a7a9ab" stroke-width="2.4" stroke-linecap="round"/>
  </svg>
  <svg class="abs" style="left:1147px;top:17px" width="16" height="17" viewBox="0 0 16 17">
    <path d="M8 0.6c0.8 0 1.2 0.5 1.2 1.2c2.4 0.7 3.6 2.6 3.6 5.2c0 3 0.8 4.4 2.2 5.6v1H1v-1c1.4-1.2 2.2-2.6 2.2-5.6c0-2.6 1.2-4.5 3.6-5.2C6.8 1.1 7.2 0.6 8 0.6z" fill="#d9dde2"/>
    <path d="M6.2 14.6h3.6a1.8 1.8 0 0 1-3.6 0z" fill="#d9dde2"/>
  </svg>
  <div class="lk" style="left:563px">首页</div>
  <div class="lk" style="left:621px">素材库</div>
  <div class="lk" style="left:693px">135服务</div>
  <div class="lk" style="left:774px">客户端下载</div>
  <div class="lk" style="left:874px">使用帮助</div>
  <div class="vip" style="left:945px">个人VIP</div>
  <div class="vip" style="left:1041px">企业VIP</div>
  <div class="lk" style="left:1187px">登录</div>
  <div class="lk" style="left:1245px">注册</div>
</div>
<div id="title"><svg class="abs" style="left:-10.500px;top:4px" width="14" height="14" viewBox="0 0 14 14"><rect x="8.600" y="1" width="2" height="5" fill="#ef3a24"/><path d="M8.600 1h4.400v2h-4.400z" fill="#8bc53f"/><path d="M9 5.500l4 1.500v2.500l-4-1.500z" fill="#f9a61a"/><rect x="11.600" y="7.500" width="2" height="5" fill="#ef3a24"/><path d="M8.600 10.500l5 0.500v2h-5z" fill="#f7c31c"/><path d="M8.600 12h5v1.500h-5z" fill="#1c9ff0"/></svg><div class="t">135编辑器官网-微信排版编辑器-微信公众号图文排版工具，好用素材多</div><svg class="abs" style="left:1170px;top:0" width="110" height="26" viewBox="1170 0 110 26"><path d="M1180 10.500H1190" stroke="#000" stroke-width="1"/><rect x="1225.500" y="5.500" width="10" height="10" fill="none" stroke="#000" stroke-width="1"/><path d="M1271 5.500L1281 15.500M1281 5.500L1271 15.500" stroke="#000" stroke-width="1.100"/></svg></div>
</body>
</html>
